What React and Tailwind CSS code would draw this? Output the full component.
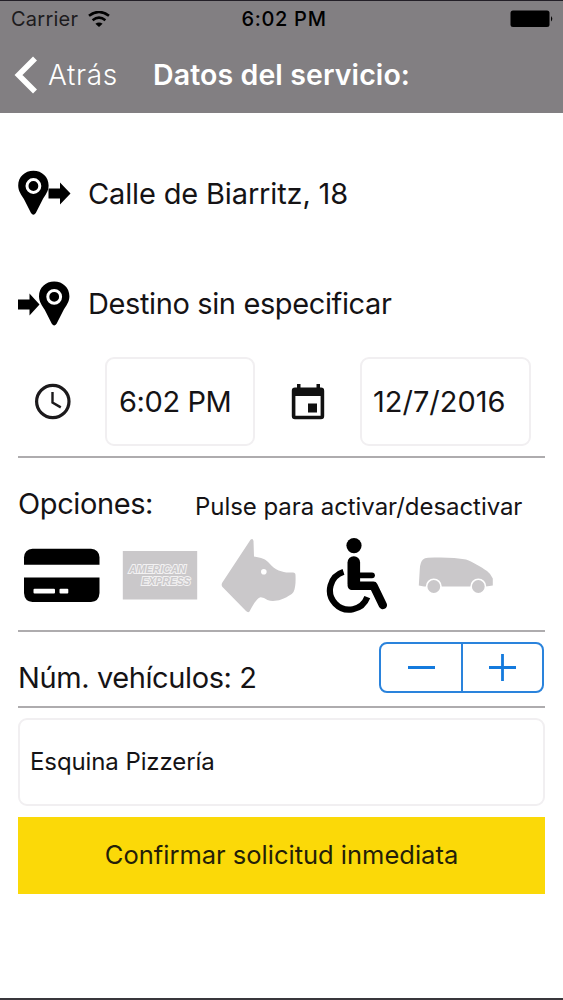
import React, { useState } from "react";

const AMEX_TEXT =
  "fill-[#cac8ca] stroke-[#f3f2f3] font-['Liberation_Sans',sans-serif] text-[10.5px] font-bold italic [paint-order:stroke]";

const WifiIcon = () => (
  <svg className="h-4 w-[22px]" viewBox="88 9 22 16" fill="none" stroke="#000" strokeWidth="2.6">
    <path d="M89 13.8Q99 6.200 109 13.8" />
    <path d="M92.6 18.2Q99 13.2 105.4 18.2" />
    <path d="M95.4 21.8Q99 19 102.6 21.8L99 25Z" fill="#000" stroke="none" />
  </svg>
);

const BatteryIcon = () => (
  <svg className="h-[18px] w-[44px]" viewBox="510 10 44 18">
    <rect x="510.5" y="10.5" width="39" height="16.5" rx="2.5" />
    <path d="M551 16q2.6 2.8 0 5.6z" />
  </svg>
);

const Pin = ({ x, y }) => (
  <g transform={`translate(${x} ${y})`}>
    <path d="M0-15.3C-8.6-15.3-15.2-9-15.2-.6C-15.2 5-12 8.800-9.500 13L-2.400 27Q0 30.600 2.400 27L9.500 13C12 8.800 15.200 5 15.200-.6C15.200-9 8.600-15.300 0-15.300Z" />
    <circle r="6.400" fill="none" stroke="#fff" strokeWidth="3" />
  </g>
);

const OriginIcon = () => (
  <svg className="h-[46px] w-[54px]" viewBox="17 170 54 46">
    <Pin x={33.4} y={186} />
    <path d="M48.500 188.500H60V182.500L70.500 193.500L60 204.500V198.500H48.500Z" />
  </svg>
);

const DestinationIcon = () => (
  <svg className="h-[46px] w-[54px]" viewBox="17 280 54 46">
    <Pin x={54.2} y={296.8} />
    <path d="M18 299.500H29.500V293.500L39.500 304.500L29.500 315.500V309.500H18Z" />
  </svg>
);

const ClockIcon = () => (
  <svg className="h-[38px] w-[38px]" viewBox="34 383 38 38" fill="none" stroke="#1c1a1c">
    <circle cx="52.800" cy="401.500" r="16.200" strokeWidth="3.200" />
    <path d="M52.500 392V402.500L60.800 407.400" strokeWidth="2.400" />
  </svg>
);

const CalendarIcon = () => (
  <svg className="h-[38px] w-[34px]" viewBox="291 381 34 38" fill="#111">
    <path
      fillRule="evenodd"
      d="M297 382h3.500v3.500h16V382h3.500v3.500h1q3.200 0 3.200 3.200V414q0 3.200-3.200 3.200H295q-3.200 0-3.200-3.200V388.700q0-3.200 3.200-3.200h2zM295.400 394v19.800h25.200V394z"
    />
    <rect x="308" y="401.500" width="9" height="9" />
  </svg>
);

const CardIcon = () => (
  <svg className="h-[80px] w-[78px]" viewBox="23 535 78 80">
    <path d="M24 564.800V557.500Q24.500 549.300 32.500 548.800H91Q99 549.300 99.500 557.500V564.800Z" />
    <path d="M24 577.500H99.500V593Q99 601.500 91 602H32.500Q24.500 601.500 24 593Z" />
    <rect x="33.500" y="588.700" width="21.500" height="4.800" rx="1" fill="#fff" />
    <rect x="59.500" y="588.700" width="8.800" height="4.800" rx="1" fill="#fff" />
  </svg>
);

const AmexIcon = () => (
  <svg className="h-[80px] w-[76px]" viewBox="122 535 76 80">
    <rect x="122.800" y="551" width="74.400" height="48.500" fill="#cac8ca" />
    <text x="129" y="573" textLength="57" lengthAdjust="spacingAndGlyphs" strokeWidth="2" className={AMEX_TEXT}>
      AMERICAN
    </text>
    <text x="141.500" y="585" textLength="49" lengthAdjust="spacingAndGlyphs" strokeWidth="2" className={AMEX_TEXT}>
      EXPRESS
    </text>
  </svg>
);

const DogIcon = () => (
  <svg className="h-[80px] w-[76px]" viewBox="221 535 76 80" fill="#cac8ca">
    <path d="M250.500 539.800Q252.800 537.600 253.500 541L254 556.500C261 557.500 266 559 269.500 563.500C275 570 282 572.500 289 572.500H293Q295.500 572.500 295.500 575C295.800 582 295.500 588 293.500 592Q292 594.800 288 596.200C283 599.500 274 602.500 267.500 600Q263.500 597 260.500 597.200C256.500 598.500 253 605 249.500 611.500Q248 613 246 611L222.500 587Q221 585 222.200 582.800Z" />
    <circle cx="263.800" cy="571.800" r="2.800" fill="#fff" />
  </svg>
);

const WheelchairIcon = () => (
  <svg className="h-[80px] w-[62px]" viewBox="326 535 62 80" fill="none" stroke="#000">
    <circle cx="354" cy="545.600" r="7.600" fill="#000" stroke="none" />
    <path d="M343.500 571.900A19.300 19.300 0 1 0 367.300 597.200" strokeWidth="6.200" />
    <path d="M353.800 562.500V583.500" strokeWidth="12.600" strokeLinecap="round" />
    <path d="M355 575.300H372" strokeWidth="5.800" strokeLinecap="round" />
    <path d="M351.800 585.700H373.500L382.800 605" strokeWidth="8.400" strokeLinecap="round" strokeLinejoin="round" />
  </svg>
);

const VanIcon = () => (
  <svg className="h-[80px] w-[76px]" viewBox="418 535 76 80" fill="#cac8ca">
    <path d="M418.800 585.500L419.800 569Q420.200 562 423 559.500Q424.500 558 428 557.800C442 557 456 557.500 466 559.500C473 562 481 567 487 571Q491 574 492.800 578.500V585.500L486 586.500H424Z" />
    <circle cx="433.800" cy="586.500" r="7.200" stroke="#fff" strokeWidth="1.600" />
    <circle cx="478.300" cy="586.500" r="7.200" stroke="#fff" strokeWidth="1.600" />
  </svg>
);

const Divider = () => <div className="h-[2px] w-full bg-[#aeacae]" />;

const Stepper = ({ onChange }) => (
  <div className="mt-[10px] flex h-[51px] w-[165px] rounded-[8px] border-2 border-[#2a83dc]">
    <button
      aria-label="Menos"
      className="flex w-[82px] items-center justify-center border-r-2 border-[#2a83dc]"
      onClick={() => onChange(-1)}
    >
      <span className="h-[3px] w-[27px] bg-[#147add]" />
    </button>
    <button aria-label="Más" className="flex flex-1 items-center justify-center" onClick={() => onChange(1)}>
      <svg className="h-[27px] w-[27px]" viewBox="0 0 27 27" stroke="#147add" strokeWidth="2.800">
        <path d="M0 13.500H27M13.500 0V27" />
      </svg>
    </button>
  </div>
);

const App = () => {
  const [vehicles, setVehicles] = useState(2);

  return (
    <div className="flex h-[1000px] w-[563px] flex-col overflow-hidden border-b-2 border-[#39373c] bg-white font-['Inter',sans-serif] text-[#151315]">
      <header className="h-[113px] border-t border-[#231f27] bg-[#827f82]">
        <div className="grid h-[36px] grid-cols-3 items-center pr-[9px] pl-[11px] text-black">
          <div className="flex items-center gap-[10px] text-[20px] text-[#1d1b1d]">
            <span className="tracking-[0.25px]">Carrier</span>
            <WifiIcon />
          </div>
          <span className="pl-[3px] text-center text-[20px] font-medium tracking-[0.7px]">6:02 PM</span>
          <div className="flex justify-end">
            <BatteryIcon />
          </div>
        </div>
        <div className="flex h-[76px] items-center pl-[14px] text-white">
          <svg className="h-[38px] w-[24px]" viewBox="0 0 24 38" fill="none" stroke="#fff" strokeWidth="5.600">
            <path d="M21 2.500L4.500 19L21 35.500" />
          </svg>
          <span className="ml-[10px] w-[105px] text-[28px] font-light tracking-[0.6px]">Atrás</span>
          <h1 className="text-[28.5px] font-semibold tracking-[0.1px] whitespace-nowrap">Datos del servicio:</h1>
        </div>
      </header>

      <main className="flex flex-col px-[18px]">
        <div className="mt-[57px] -ml-px flex h-[46px] items-center gap-[17px] text-[29px]">
          <OriginIcon />
          <span className="mt-[2px] tracking-[-0.15px] whitespace-nowrap">Calle de Biarritz, 18</span>
        </div>
        <div className="mt-[64px] -ml-px flex h-[46px] items-center gap-[17px] text-[29px]">
          <DestinationIcon />
          <span className="mt-[2px] tracking-[-0.38px] whitespace-nowrap">Destino sin especificar</span>
        </div>

        <div className="mt-[31px] flex h-[89px] items-center pl-4 text-[29px]">
          <ClockIcon />
          <div className="ml-[33px] flex h-[89px] w-[150px] items-center rounded-[9px] border-2 border-[#f1eff1] pl-[12px] tracking-[-0.4px]">
            6:02 PM
          </div>
          <div className="ml-[36px] flex">
            <CalendarIcon />
          </div>
          <div className="ml-[35px] flex h-[89px] w-[171px] items-center rounded-[9px] border-2 border-[#f1eff1] pl-[11px]">
            12/7/2016
          </div>
        </div>
        <div className="mt-[10px]">
          <Divider />
        </div>

        <div className="mt-[24px] flex h-[44px] items-center text-[29px]">
          <span className="w-[177px] tracking-[-0.4px]">Opciones:</span>
          <span className="mt-[5px] text-[24px] tracking-[-0.06px] whitespace-nowrap">Pulse para activar/desactivar</span>
        </div>
        <div className="mt-[9px] flex pl-[5px]">
          <CardIcon />
          <div className="ml-[21px]">
            <AmexIcon />
          </div>
          <div className="ml-[23px]">
            <DogIcon />
          </div>
          <div className="ml-[29px]">
            <WheelchairIcon />
          </div>
          <div className="ml-[30px]">
            <VanIcon />
          </div>
        </div>
        <div className="mt-[15px]">
          <Divider />
        </div>

        <div className="flex h-[74px] justify-between pr-[1px] text-[29px]">
          <span className="mt-[24px] tracking-[-0.4px]">Núm. vehículos: {vehicles}</span>
          <Stepper onChange={(n) => setVehicles((v) => Math.max(1, v + n))} />
        </div>
        <Divider />

        <div className="mt-[10px] flex h-[88px] items-center rounded-[9px] border-2 border-[#f1eff1] pl-[10px] text-[24px] tracking-[-0.1px]">
          Esquina Pizzería
        </div>
        <button className="mt-[11px] h-[77px] bg-[#fbd908] text-[25.500px] text-[#241f08]">
          Confirmar solicitud inmediata
        </button>
      </main>
    </div>
  );
};

export default App;
